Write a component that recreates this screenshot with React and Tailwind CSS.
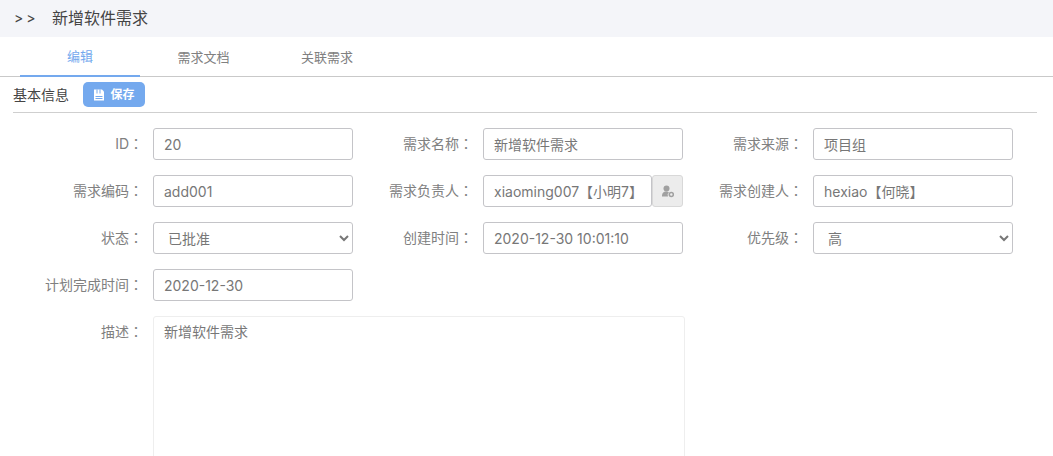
import { useState } from 'react'

const FONT = "font-['Inter','Noto_Sans_CJK_SC',sans-serif]"
const INPUT_CLS = 'h-8 w-[200px] rounded-[3px] border border-[#c4c4c8] bg-white px-2.5 text-sm text-[#777] outline-none'
const SELECT_CLS = 'h-8 w-[200px] rounded-[3px] border border-[#c4c4c8] bg-white pl-2.5 text-sm text-[#777] outline-none'

const TABS = [
  { label: '编辑', cls: 'w-[120px]' },
  { label: '需求文档', cls: 'w-[127px]' },
  { label: '关联需求', cls: 'w-[120px]' },
]

// Fullwidth colon from the TC face, which centres it in its box
function Colon() {
  return <span className="font-['Noto_Sans_CJK_TC']">：</span>
}

function Field({ label, children }) {
  return (
    <div className="flex w-[330px] items-center">
      <label className="w-[130px] shrink-0 pr-2.5 pb-px text-right text-sm whitespace-nowrap text-[#808080]">
        {label}<Colon />
      </label>
      {children}
    </div>
  )
}

function TextField({ label, value }) {
  return (
    <Field label={label}>
      <input className={INPUT_CLS} defaultValue={value} readOnly />
    </Field>
  )
}

function SelectField({ label, value }) {
  return (
    <Field label={label}>
      <select className={SELECT_CLS} defaultValue={value}>
        <option>{value}</option>
      </select>
    </Field>
  )
}

export default function App() {
  const [activeTab, setActiveTab] = useState('编辑')

  return (
    <div className={`${FONT} h-[456px] w-[1053px] overflow-hidden bg-white`}>
      {/* Title bar */}
      <div className="flex h-[37px] items-center bg-[#f4f5f9] pb-0.5 pl-[14px] text-[#444]">
        <span className="w-[38px] text-sm [word-spacing:-1px]">&gt; &gt;</span>
        <span className="text-base">新增软件需求</span>
      </div>

      {/* Tabs */}
      <div className="flex h-10 border-b border-[#c9c9c9] pl-5">
        {TABS.map(({ label, cls }) => (
          <button
            key={label}
            type="button"
            onClick={() => setActiveTab(label)}
            className={[
              'h-10 pt-0.5 text-[13px]',
              cls,
              activeTab === label ? 'border-b-2 border-[#74a9ee] text-[#74a9ee]' : 'text-[#808080]',
            ].join(' ')}
          >
            {label}
          </button>
        ))}
      </div>

      {/* Toolbar */}
      <div className="mr-4 ml-[13px] flex h-9 items-center border-b border-[#cfcfcf]">
        <span className="text-sm text-[#444]">基本信息</span>
        <button
          type="button"
          className="ml-[14px] flex h-[25px] w-[62px] items-center justify-center gap-[5px] rounded-[5px] bg-[#74a9ee] text-xs font-bold text-white"
        >
          <svg width="12" height="12" viewBox="0 0 12 12" fill="none">
            <path d="M1 0.5h8L11 2.5V11.5H1z" fill="white" />
            <rect x="3.5" y="0.5" width="1" height="4" fill="#74a9ee" />
            <rect x="6.5" y="0.5" width="1" height="4" fill="#74a9ee" />
            <rect x="2.5" y="7" width="7" height="1" fill="#74a9ee" />
            <rect x="2.5" y="9" width="7" height="1" fill="#74a9ee" />
          </svg>
          保存
        </button>
      </div>

      {/* Form */}
      <div className="flex flex-col gap-[15px] pt-[15px] pl-[23px]">
        <div className="flex">
          <TextField label="ID" value="20" />
          <TextField label="需求名称" value="新增软件需求" />
          <TextField label="需求来源" value="项目组" />
        </div>
        <div className="flex">
          <TextField label="需求编码" value="add001" />
          <Field label="需求负责人">
            <div className="flex">
              <input className="h-8 w-[169px] rounded-[3px] border border-[#c4c4c8] bg-white pr-0 pl-2.5 text-sm text-[#777] outline-none" defaultValue="xiaoming007【小明7】" readOnly />
              <button type="button" className="flex h-8 w-[31px] items-center justify-center rounded-[3px] border border-[#d8d8d8] bg-[#ececec]">
                <svg width="14" height="14" viewBox="0 0 14 14" fill="#a0a0a0">
                  <circle cx="5.5" cy="4.4" r="3" />
                  <path d="M1 12.5c0-3 1-5 4.5-5 1 0 1.8.2 2.4.7A3.6 3.6 0 0 0 7 12.5z" />
                  <circle cx="10.3" cy="10.5" r="2" fill="none" stroke="#a0a0a0" strokeWidth="1.5" />
                </svg>
              </button>
            </div>
          </Field>
          <TextField label="需求创建人" value="hexiao【何晓】" />
        </div>
        <div className="flex">
          <SelectField label="状态" value="已批准" />
          <TextField label="创建时间" value="2020-12-30 10:01:10" />
          <SelectField label="优先级" value="高" />
        </div>
        <div className="flex">
          <TextField label="计划完成时间" value="2020-12-30" />
        </div>
        <div className="flex items-start">
          <label className="w-[130px] shrink-0 pt-[5px] pr-2.5 text-right text-sm text-[#808080]">
            描述<Colon />
          </label>
          <textarea
            className="h-[200px] w-[532px] resize-none rounded-[3px] border border-[#eeeeee] bg-white px-2.5 py-[5px] text-sm text-[#777] outline-none"
            defaultValue="新增软件需求"
            readOnly
          />
        </div>
      </div>
    </div>
  )
}
